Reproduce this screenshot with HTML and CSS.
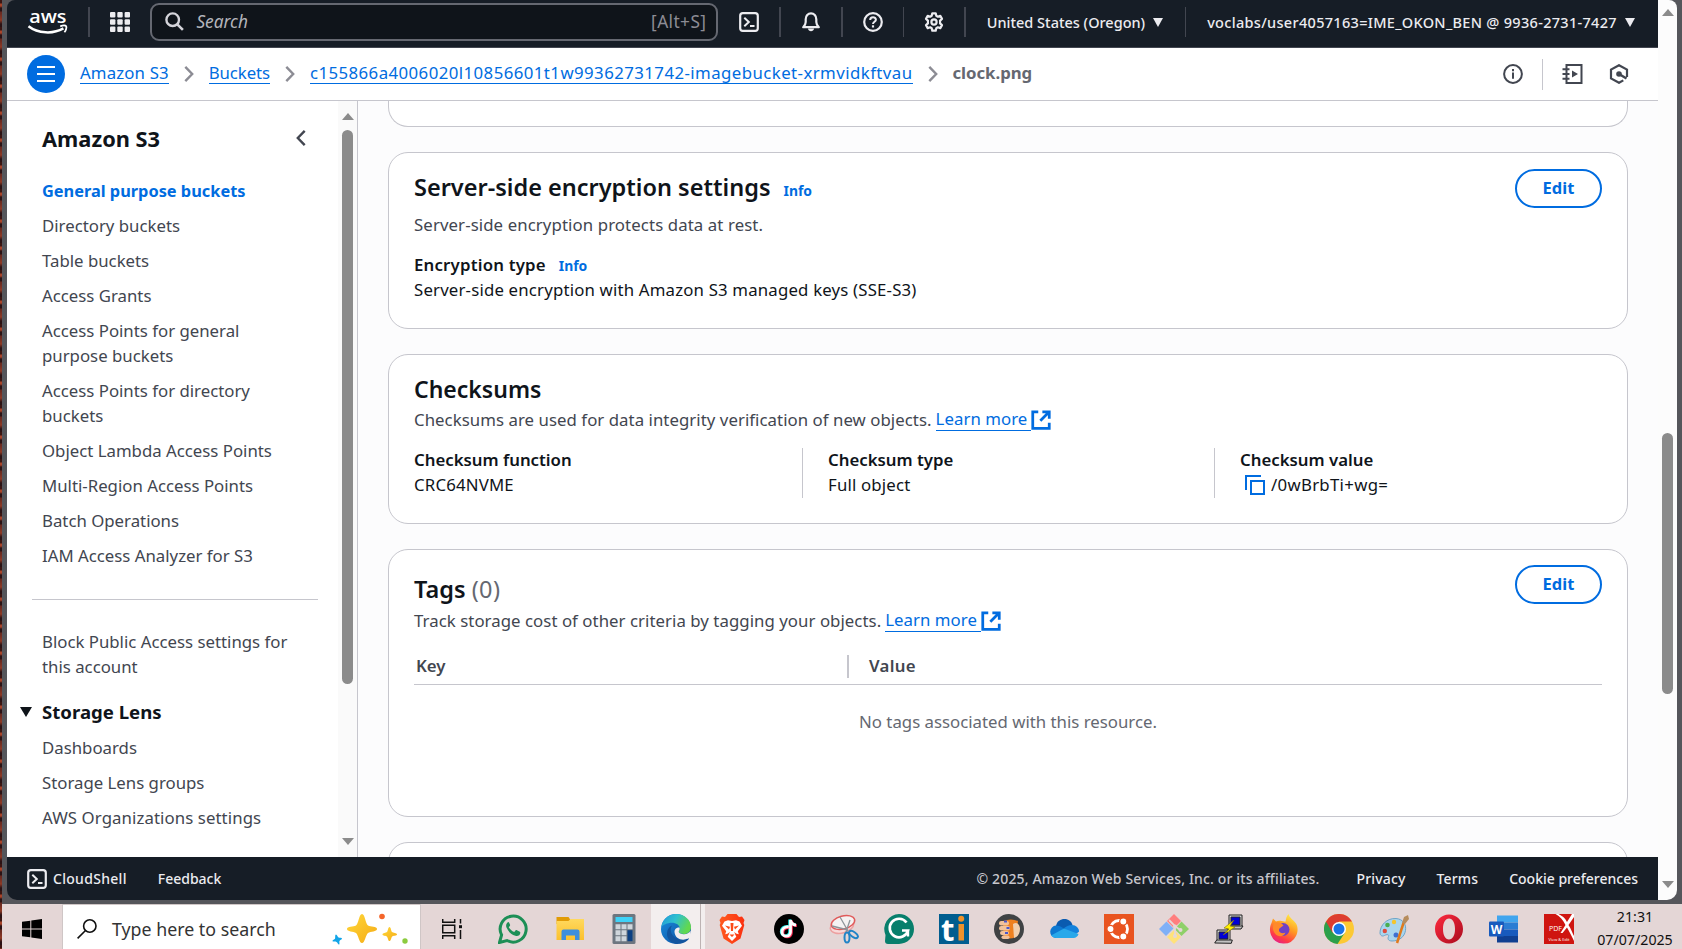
FILE: index.html
```html
<!DOCTYPE html>
<html lang="en">
<head>
<meta charset="utf-8">
<title>clock.png - Amazon S3</title>
<link rel="stylesheet" href="styles.css">
</head>
<body>
<svg class="defs" width="0" height="0">
  <defs>
    <symbol id="ext" viewBox="0 0 16 16"><path d="M6 2H2v12h12v-4M9 2h5v5M14 2 7.500 8.500" fill="none" stroke="currentColor" stroke-width="2"/></symbol>
    <symbol id="shell" viewBox="0 0 20 20"><rect x="1.200" y="1.200" width="17.600" height="17.600" rx="2.600" fill="none" stroke="currentColor" stroke-width="2.200"/><path d="M5.300 5.800 9.800 10l-4.500 4.200M11 14h4.500" fill="none" stroke="currentColor" stroke-width="2"/></symbol>
    <symbol id="chev" viewBox="0 0 10 18"><path d="M1.300 1.800 8.200 9l-6.900 7.200" fill="none" stroke="currentColor" stroke-width="2.400"/></symbol>
    <linearGradient id="edgeA" x1="0" y1="0" x2="1" y2="1"><stop offset="0" stop-color="#1a8fe0"/><stop offset="1" stop-color="#0c4a9b"/></linearGradient>
    <linearGradient id="edgeB" x1="0" y1="0" x2="1" y2=".4"><stop offset="0" stop-color="#2196d8"/><stop offset=".5" stop-color="#2fc1cf"/><stop offset="1" stop-color="#62d84e"/></linearGradient>
    <linearGradient id="fox" x1=".8" y1="0" x2=".3" y2="1"><stop offset="0" stop-color="#fff24a"/><stop offset=".45" stop-color="#ff9a23"/><stop offset=".8" stop-color="#ff3b46"/><stop offset="1" stop-color="#e4208a"/></linearGradient>
    <linearGradient id="gold" x1="0" y1="0" x2="1" y2="1"><stop offset="0" stop-color="#ffd83a"/><stop offset="1" stop-color="#f5ab16"/></linearGradient>
    <linearGradient id="folder" x1="0" y1="0" x2="0" y2="1"><stop offset="0" stop-color="#ffd95e"/><stop offset="1" stop-color="#fbc02d"/></linearGradient>
    <linearGradient id="op" x1="0" y1="0" x2="1" y2="1"><stop offset="0" stop-color="#ff2a3f"/><stop offset="1" stop-color="#a80c1e"/></linearGradient>
    <linearGradient id="brave" x1="0" y1="0" x2="1" y2="0"><stop offset="0" stop-color="#ff5a1f"/><stop offset="1" stop-color="#fb3010"/></linearGradient>
  </defs>
</svg>
<div class="screen">
  <div class="wallpaper"></div>
  <div class="desktop">
    <div class="window">
      <div class="app">
        <header class="topbar">
          <svg class="aws" width="40" height="26" viewBox="0 0 40 26"><text class="aws-word" x="1.200" y="13.500" textLength="37.300" lengthAdjust="spacingAndGlyphs">aws</text><path d="M.5 17.200C10 24.600 25 25.400 35.400 19.400" fill="none" stroke="#fff" stroke-width="2.500"/><path d="M32.200 17.300c3-1 5.400-.8 6 0 .6 1-.2 4-1.800 6" fill="none" stroke="#fff" stroke-width="1.800"/></svg>
          <i class="bar bar-a"></i>
          <svg class="grid" width="20" height="20" viewBox="0 0 20 20" fill="#ececf0"><rect width="5.400" height="5.400" rx="1"/><rect x="7.300" width="5.400" height="5.400" rx="1"/><rect x="14.600" width="5.400" height="5.400" rx="1"/><rect y="7.300" width="5.400" height="5.400" rx="1"/><rect x="7.300" y="7.300" width="5.400" height="5.400" rx="1"/><rect x="14.600" y="7.300" width="5.400" height="5.400" rx="1"/><rect y="14.600" width="5.400" height="5.400" rx="1"/><rect x="7.300" y="14.600" width="5.400" height="5.400" rx="1"/><rect x="14.600" y="14.600" width="5.400" height="5.400" rx="1"/></svg>
          <div class="search">
            <svg width="19" height="19" viewBox="0 0 19 19" fill="none" stroke="#d4d4da"><circle cx="7.700" cy="7.700" r="6.300" stroke-width="2.400"/><path d="m12.300 12.300 5.600 5.600" stroke-width="2.600"/></svg>
            <span class="ph">Search</span>
            <span class="kbd">[Alt+S]</span>
          </div>
          <div class="icons">
            <svg width="20" height="20"><use href="#shell"/></svg>
            <i class="bar"></i>
            <svg width="20" height="20" viewBox="0 0 20 20" fill="none" stroke="currentColor" stroke-width="2.200"><path d="M2.200 15.200h15.600c-1.600-1.600-2.500-3-2.500-5.200V7.200C15.300 4 13 1.400 10 1.400S4.700 4 4.700 7.200V10c0 2.200-.9 3.600-2.500 5.200z" stroke-linejoin="round"/><path d="M7 16.500c.3 3.600 5.700 3.600 6 0z" fill="currentColor" stroke="none"/></svg>
            <i class="bar"></i>
            <svg width="20" height="20" viewBox="0 0 20 20" fill="none" stroke="currentColor" stroke-width="2.200"><circle cx="10" cy="10" r="8.800"/><path d="M7.200 8c0-3.600 5.700-3.600 5.700-.2 0 2-2.900 2-2.900 4.200" stroke-width="2"/><path d="M10 13.300v2.200" stroke-width="2.200"/></svg>
            <i class="bar"></i>
            <svg width="20" height="20" viewBox="0 0 20 20" fill="none" stroke="currentColor" stroke-width="2.200" stroke-linejoin="round"><circle cx="10" cy="10" r="2.600"/><path d="M8.300 1.300h3.400l.6 2.500 1.500.9 2.500-.8 1.700 3-1.900 1.700v2.800l1.900 1.700-1.700 3-2.500-.8-1.500.9-.6 2.500H8.300l-.6-2.500-1.500-.9-2.500.8-1.700-3 1.900-1.700V8.600L2 6.900l1.700-3 2.500.8 1.500-.9z"/></svg>
            <i class="bar"></i>
          </div>
          <span class="tl region">United States (Oregon)</span><i class="caret"></i>
          <i class="bar bar-b"></i>
          <span class="tl account">voclabs/user4057163=IME_OKON_BEN @ 9936-2731-7427</span><i class="caret"></i>
        </header>
        <nav class="crumbs">
          <span class="burger"><i></i><i></i><i></i></span>
          <a class="root">Amazon S3</a><svg class="sep" width="10" height="18"><use href="#chev"/></svg>
          <a class="mid">Buckets</a><svg class="sep" width="10" height="18"><use href="#chev"/></svg>
          <a class="bucket">c155866a4006020l10856601t1w99362731742-imagebucket-xrmvidkftvau</a><svg class="sep" width="10" height="18"><use href="#chev"/></svg>
          <b>clock.png</b>
          <div class="tools">
            <svg width="20" height="20" viewBox="0 0 20 20" fill="none" stroke="currentColor" stroke-width="2"><circle cx="10" cy="10" r="8.900"/><path d="M10 8.500v6.300M10 5v2.200"/></svg>
            <i class="rule"></i>
            <svg width="21" height="20" viewBox="0 0 21 20" fill="none" stroke="currentColor" stroke-width="2"><path d="M4.500 1h15v18h-15z"/><path d="M.5 5.200h7M.5 10h7M.5 14.800h7" stroke-width="1.900"/><path d="m10 6.500 6 3.500-6 3.500z" fill="currentColor" stroke="none"/></svg>
            <svg class="hex" width="20" height="20" viewBox="0 0 20 20" fill="none" stroke="currentColor" stroke-width="2.200"><path d="M18 13V5.600L10 1.200 2 5.600v8.800l8 4.400 4.300-2.400"/><circle cx="10" cy="10" r="2.800" fill="currentColor" stroke="none"/><path d="m10 10 7.500 4.500" stroke-width="2.600"/></svg>
          </div>
        </nav>
        <div class="body">
          <aside class="side">
            <div class="nav">
              <div class="nav-head"><span>Amazon S3</span><svg width="10" height="18"><use href="#chev"/></svg></div>
              <ul>
                <li class="on">General purpose buckets</li>
                <li>Directory buckets</li>
                <li>Table buckets</li>
                <li>Access Grants</li>
                <li>Access Points for general<br>purpose buckets</li>
                <li>Access Points for directory<br>buckets</li>
                <li>Object Lambda Access Points</li>
                <li>Multi-Region Access Points</li>
                <li>Batch Operations</li>
                <li>IAM Access Analyzer for S3</li>
              </ul>
              <hr>
              <ul>
                <li>Block Public Access settings for<br>this account</li>
                <li class="group"><i></i>Storage Lens</li>
                <li>Dashboards</li>
                <li>Storage Lens groups</li>
                <li class="wide">AWS Organizations settings</li>
              </ul>
            </div>
            <div class="sbar"><i class="up"></i><i class="thumb"></i><i class="down"></i></div>
          </aside>
          <main class="main">
            <section class="card card-prev"></section>
            <section class="card sse">
              <div class="text">
                <h2>Server-side encryption settings<small>Info</small></h2>
                <p class="sub">Server-side encryption protects data at rest.</p>
                <p class="label">Encryption type<small>Info</small></p>
                <p class="val">Server-side encryption with Amazon S3 managed keys (SSE-S3)</p>
              </div>
              <button class="edit">Edit</button>
            </section>
            <section class="card sums">
              <h2>Checksums</h2>
              <p class="sub">Checksums are used for data integrity verification of new objects.<a>Learn more</a><svg width="22" height="22"><use href="#ext"/></svg></p>
              <div class="cols">
                <div><p class="label">Checksum function</p><p class="val">CRC64NVME</p></div>
                <div><p class="label">Checksum type</p><p class="val">Full object</p></div>
                <div><p class="label">Checksum value</p><p class="val copy"><svg width="20" height="20" viewBox="0 0 20 20" fill="none" stroke="currentColor" stroke-width="2"><path d="M6 6h13v13H6z"/><path d="M1 15V1h15"/></svg>/0wBrbTi+wg=</p></div>
              </div>
            </section>
            <section class="card tags">
              <div class="tags-top"><h2>Tags <em>(0)</em></h2><button class="edit">Edit</button></div>
              <p class="sub">Track storage cost of other criteria by tagging your objects.<a>Learn more</a><svg width="22" height="22"><use href="#ext"/></svg></p>
              <div class="thead"><span class="k">Key</span><span class="v">Value</span></div>
              <p class="none">No tags associated with this resource.</p>
            </section>
            <section class="card card-next"></section>
          </main>
        </div>
        <footer class="foot">
          <svg width="20" height="20"><use href="#shell"/></svg><span class="f1">CloudShell</span><span>Feedback</span>
          <span class="copyr">© 2025, Amazon Web Services, Inc. or its affiliates.</span><span class="f3">Privacy</span><span class="f4">Terms</span><span class="f5">Cookie preferences</span>
        </footer>
      </div>
      <div class="vbar"><i class="up"></i><i class="thumb"></i><i class="down"></i></div>
    </div>
    <div class="taskbar">
      <svg class="start" width="20" height="20" viewBox="0 0 20 20"><path d="M0 2.800 8.300 1.700v7.900H0zM9.300 1.500 20 0v9.600H9.300zM0 10.500h8.300v7.800L0 17.200zM9.300 10.500H20V20L9.300 18.500z"/></svg>
      <div class="tsearch">
        <svg width="20" height="20" viewBox="0 0 20 20" fill="none" stroke="#111" stroke-width="1.600"><circle cx="12.800" cy="7" r="6.200"/><path d="M8.500 11.500.6 19.400"/></svg>
        <span>Type here to search</span>
        <svg class="stars" width="78" height="34" viewBox="0 0 78 34"><path d="M31 2c3 0 3.500 10 6 11.500S46 14 46 17s-6.500 2-9 4-3 10-6 10-3.500-8-6-10-9-1-9-4 6.500-2 9-3.500S28 2 31 2z" fill="url(#gold)"/><path d="M58.500 15c1.500 0 1.500 4 2.500 5s5 1 5 2.500-4 1-5 2.200-1 4.300-2.500 4.300-1.500-3.200-2.500-4.300-4.500-.7-4.500-2.200 3.500-1.500 4.500-2.500 1-5 2.500-5z" fill="url(#gold)"/><path d="M5 22.500c1 0 1.500 2.500 2.500 3s3.500 0 3.500 1-2 1.500-2.500 2.500.5 3.500-.5 3.500-1.500-2-2.500-2.500S1.500 30 1.500 29s2-1.300 2.500-2.200-.2-4.300 1-4.300z" fill="#12a5e8"/><circle cx="51" cy="4.500" r="2.800" fill="#f4652a"/><circle cx="74" cy="29" r="2.700" fill="#8ccb3f"/></svg>
      </div>
      <div class="apps">
        <div class="ap tv"><svg width="20" height="20" viewBox="0 0 20 20" fill="none" stroke="#111" stroke-width="1.500"><path d="M.7 0v3.200h12V0M.7 20v-3.300h12V20M.7 6.200h12v7.500H.7zM18.500 0v4.500M18.500 11v9"/><path d="M17 6.200h3v3h-3z" fill="#111" stroke="none"/></svg></div>
        <div class="ap a2"><svg width="30" height="30" viewBox="0 0 30 30"><path d="M1.500 28.500 3.600 21A13 13 0 1 1 9 26.500z" fill="none" stroke="#1d8f56" stroke-width="3"/><path d="M10.500 8c-2.200.8-2.900 3.300-2 5.600 1.800 4.200 4.700 6.900 8.900 8.200 2.500.7 4.700-.6 4.900-2.900.1-.9-.2-1.200-.9-1.500l-2.500-1.200c-.8-.4-1.200-.2-1.700.5l-.9 1.200c-2.500-.9-4.200-2.500-5.500-4.700l1-1.300c.4-.5.4-1 .2-1.500L11 8.500c-.2-.4-.3-.6-.5-.5z" fill="#1d8f56"/></svg></div>
        <div class="ap a3"><svg width="30" height="30" viewBox="0 0 30 30"><path d="M1.500 3h12l2 3v4h-14z" fill="#e19b06"/><path d="M1.500 7h12l2-2H29v21H1.500z" fill="url(#folder)"/><path d="M6.500 26V17.500q0-2 2-2h14q2 0 2 2V26h-4.500v-4.500h-9V26z" fill="#3d8fdc"/></svg></div>
        <div class="ap a4"><svg width="30" height="30" viewBox="0 0 30 30"><rect x="3.500" width="23" height="30" rx="1.500" fill="#6d7680"/><path d="M6.500 3h17v5h-17z" fill="#3fd2f8"/><g fill="#cfd6dc"><path d="M6.500 10.200h5v5h-5zM12.500 10.200h5v5h-5zM18.500 10.200h5v5h-5zM6.500 16.200h5v5h-5zM12.500 16.200h5v5h-5zM6.500 22.200h5v5h-5zM12.500 22.200h5v5h-5z"/></g><path d="M18.500 16.200h5v11h-5z" fill="#0b4083"/></svg></div>
        <div class="ap edge"><svg width="30" height="30" viewBox="0 0 30 30"><circle cx="15" cy="15" r="15" fill="url(#edgeA)"/><path d="M.4 13C1.500 5 8 0 15 0c8.500 0 15 6 15 13.200 0 4-3.200 6.800-7 6.800-2.800 0-5.200-.8-5.200-2.200 0-.9 1-1.500 1-3.300C18.800 11 15 8.700 11 8.700 6 8.700 1.800 11 .4 13z" fill="url(#edgeB)"/><path d="M11 11.500c-2.800 3.500-1.500 12.500 8.500 14 4 .5 7-.8 8.200-1.300.4 0 .5.300.3.600C25.500 28.300 20.500 30 16 30 10 29.500 5.500 24.500 6 19c.3-4 2.500-6.500 5-7.500z" fill="#12559f"/><path d="M18.700 14.500c0 2-1 2.400-1 3.300 0 1.500 2.500 2.400 5.300 2.400 3 0 5.200-1.300 6.500-3.500L30 22l-3 2.500c-5.500 2.800-13 .5-13.500-6.500 0-2.500 1.500-4.500 5-4.500z" fill="#f3eeee"/></svg></div>
        <div class="ap a6"><svg width="30" height="30" viewBox="0 0 30 30"><path d="m8 3 2.500-3h9L22 3l3-.5L27.500 6l-1 3 .8 2-3.800 13.500L15 30l-8.500-5.500L2.700 11l.8-2-1-3L5 2.500z" fill="url(#brave)"/><path d="M7.500 7.500 11 6.300l4 .8 4-.8 3.500 1.200 2.500 4.300-4.200 5.400 1 3-2.800-.7-1.800-1.800.9 2.600 1.200 2.500L15 27l-4.300-4.200 1.200-2.500.9-2.600-1.800 1.800-2.800.7 1-3L5 11.800z" fill="#fff"/><path d="m8 11.500 5 1.200-1 2.800zM22 11.500l-5 1.200 1 2.800zM13.500 9h3l-.5 8h-2zM12.500 20.500h5L15 23z" fill="#fb4a18"/></svg></div>
        <div class="ap"><svg width="30" height="30" viewBox="0 0 30 30"><circle cx="15" cy="15" r="15" fill="#000"/><g fill="none" stroke-width="2.800"><path d="M14.800 13c-4.500-.5-7 2.200-6.800 5.300.3 5.200 8.400 5.300 8.500-.3V6c.5 3 2.500 4.800 5.500 5" stroke="#25f4ee" transform="translate(-.8 -.6)"/><path d="M14.800 13c-4.500-.5-7 2.200-6.800 5.300.3 5.200 8.400 5.300 8.500-.3V6c.5 3 2.500 4.800 5.500 5" stroke="#fe2c55" transform="translate(.9 .7)"/><path d="M14.800 13c-4.500-.5-7 2.200-6.800 5.300.3 5.200 8.400 5.300 8.500-.3V6c.5 3 2.500 4.800 5.500 5" stroke="#fff"/></g></svg></div>
        <div class="ap"><svg width="30" height="30" viewBox="0 0 30 30" fill="none"><ellipse cx="13" cy="12" rx="12" ry="7" transform="rotate(-15 13 12)" fill="#f7dada" stroke="#eda0a0" stroke-width="1.400"/><ellipse cx="14" cy="8.500" rx="12" ry="6.500" transform="rotate(-15 14 8.500)" fill="#f5f2f2" stroke="#e05a5a" stroke-width="1.500"/><path d="m11 3 8 14M3 12l16 4M21 6l-4 12" stroke="#8d9499" stroke-width="1.300"/><ellipse cx="18" cy="23.500" rx="2.500" ry="5" stroke="#2184c7" stroke-width="2"/><ellipse cx="24.500" cy="20.500" rx="2.500" ry="5" transform="rotate(-55 24.500 20.500)" stroke="#2184c7" stroke-width="2"/></svg></div>
        <div class="ap"><svg width="30" height="30" viewBox="0 0 30 30"><path d="M15 0a15 15 0 1 1 0 30H4q-3 0-3-3l.5-6A15 15 0 0 1 15 0z" fill="#077f6c"/><path d="M22.500 8.500A9.300 9.300 0 1 0 24 16.500h-6" fill="none" stroke="#fff" stroke-width="2.700"/><path d="M24 16.500v6" stroke="#fff" stroke-width="2.400"/></svg></div>
        <div class="ap"><svg class="vis" width="30" height="30" viewBox="0 0 30 30"><path d="M0 0h30v30H0z" fill="#005d8f"/><text class="ti" x="2" y="26.500">t</text><path d="M19.500 10h5.500v16.500h-5.500z" fill="#f0922b"/><circle cx="22.200" cy="4.800" r="3" fill="#f0922b"/></svg></div>
        <div class="ap"><svg width="30" height="30" viewBox="0 0 30 30"><circle cx="15" cy="15" r="15" fill="#3f4244"/><path d="M9 7q8-3 15 0l-2.500 16q-6 3-12 0z" fill="#ee8120"/><path d="M19 10c4-3 7 1 7 5s-2 8-6 9z" fill="#f1cfae"/><g fill="#f1c19a"><rect x="5" y="7" width="10" height="4.500" rx="2.200"/><rect x="5" y="12" width="11" height="4.500" rx="2.200"/><rect x="6" y="17" width="9" height="4" rx="2"/><rect x="7.500" y="21.500" width="8" height="3.500" rx="1.700"/></g><path d="M10 6.500h3v2h-3zM12.500 13h3v2h-3zM11 18h3v2h-3z" fill="#4a57c9"/></svg></div>
        <div class="ap"><svg width="30" height="30" viewBox="0 0 30 30"><path d="M7 12C8 7 11.500 5 15.500 5c4 0 7 2.500 8 6l-9 8z" fill="#0a5bb0"/><path d="M7 11.500c3 0 5 1 7 2.500l9 6-15 4H6.500a6.300 6.300 0 0 1 .5-12.500z" fill="#0d78d1"/><path d="M23 11c4 0 7 3 7 6.700l-6 4.300-9-7.700c2-2 4.500-3.300 8-3.300z" fill="#1382dc"/><path d="m15 14.500 14.500 5.500a5.700 5.700 0 0 1-5 4H7A6.400 6.400 0 0 1 2 21.500z" fill="#28a8ea"/></svg></div>
        <div class="ap"><svg width="30" height="30" viewBox="0 0 30 30"><path d="M0 0h30v30H0z" fill="#e95420"/><circle cx="15" cy="15" r="8.500" fill="none" stroke="#fff" stroke-width="2.800"/><g fill="#fff" stroke="#e95420" stroke-width="1.300"><circle cx="6.500" cy="15" r="3.600"/><circle cx="19.300" cy="7.500" r="3.600"/><circle cx="19.300" cy="22.500" r="3.600"/></g></svg></div>
        <div class="ap"><svg width="30" height="30" viewBox="0 0 30 30"><path d="m15 0 7 7-7 7-7-7z" fill="#ff7e7e"/><path d="m7.500 7.500 7 7-7.500 7.500L0 15z" fill="#7fb0f7"/><path d="m22.500 7.500 7.500 7.500-7.500 7-7-7z" fill="#8fd069"/><path d="m15 16 7 7-7 7-7-7z" fill="#ffe27a"/><path d="m10 6 6 6v10M16 12l5 4" fill="none" stroke="#e5d7d7" stroke-width="1.800"/><circle cx="16" cy="12.500" r="2" fill="#e5d7d7"/><circle cx="21.500" cy="16" r="2" fill="#e5d7d7"/><circle cx="16" cy="22" r="2" fill="#e5d7d7"/></svg></div>
        <div class="ap"><svg width="30" height="30" viewBox="0 0 30 30" stroke="#222" stroke-width="1"><path d="M15 1h13v12H15z" fill="#d6d6d6"/><path d="M17 3h9v8h-9z" fill="#0000d8"/><path d="m13 14 2-2h14l-2 3H13z" fill="#c2c2c2"/><path d="M3 16h13v11H3z" fill="#d6d6d6"/><path d="M5 18h9v7H5z" fill="#0000d8"/><path d="m.7 29 2-3h15.600l-1 3.300z" fill="#c2c2c2"/><path d="m20 6-10 8 5 1-6 6 12-8-5-1z" fill="#ffee00" stroke="#7a7200" stroke-width=".6"/></svg></div>
        <div class="ap"><svg width="30" height="30" viewBox="0 0 30 30"><path d="M19.500 0c1 4 5 6 7.500 9.500 2 3 2.200 8.500 0 12.500a13.700 13.700 0 0 1-25-1C.3 17 .8 12 2.500 9L4 4.500l3 3c2-1 4-.8 5.500-.5l4 .8C17 5 17.500 2 19.500 0z" fill="url(#fox)"/><circle cx="14" cy="15.500" r="6.500" fill="#7040c4"/><path d="M5 9c3-1.500 7-1 9.500 2.500L11 14c-1.200 1-1.500 2.500-.3 4 1.500 1.500 4 1.500 5.800.5-1.500 4.500-7.500 5-10.500 1S4 12 5 9z" fill="#ff8a2a"/></svg></div>
        <div class="ap"><svg width="30" height="30" viewBox="0 0 30 30"><circle cx="15" cy="15" r="15" fill="#fcc934"/><path d="M15 15 2 7.500A15 15 0 0 0 13.500 30L21 18.500z" fill="#2b9f4b"/><path d="M2 7.500A15 15 0 0 1 28 7.500H15L8.500 18.700z" fill="#dd3c30"/><circle cx="15" cy="15" r="7" fill="#fff"/><circle cx="15" cy="15" r="5.500" fill="#1a73e8"/></svg></div>
        <div class="ap"><svg width="30" height="30" viewBox="0 0 30 30"><path d="M1 19C1 11 8 4 17 4.500c7 .5 10.500 6 9.500 12C25.500 23 20 27 13 27c-4 0-4.500-2.500-3.500-4.500S8 20 5.500 21.500 1 21 1 19z" fill="#a9d5ee" stroke="#6fa5c8"/><circle cx="5.800" cy="17" r="2.200" fill="#e04b3a"/><circle cx="8.500" cy="11" r="2.300" fill="#4aae4f"/><circle cx="15" cy="8" r="2.200" fill="#f5c52c"/><circle cx="17" cy="21" r="2.500" fill="#3f6fd0"/><path d="M18 29 24.500 9" stroke="#e07a1c" stroke-width="2.500"/><path d="m23 9 2-6 4-2 1 4-4 5z" fill="#b78c5c"/></svg></div>
        <div class="ap"><svg width="30" height="30" viewBox="0 0 30 30"><path fill-rule="evenodd" d="M15 .5C23 .5 29 7 29 15s-6 14.500-14 14.500S1 23 1 15 7 .5 15 .5zm0 4c-3.700 0-6 4.500-6 10.500s2.300 10.500 6 10.500S21 21 21 15 18.700 4.500 15 4.500z" fill="url(#op)"/></svg></div>
        <div class="ap"><svg width="30" height="30" viewBox="0 0 30 30"><path d="M8 1.500h21v7H8z" fill="#41a5ee"/><path d="M8 8.500h21v7H8z" fill="#2b7cd3"/><path d="M8 15.500h21v6.500H8z" fill="#185abd"/><path d="M8 22h21v6.500H8z" fill="#103f91"/><rect y="7.500" width="15" height="15" rx="1" fill="#185abd"/><text class="wd" x="1.800" y="19.500">W</text></svg></div>
        <div class="ap"><svg width="30" height="30" viewBox="0 0 30 30"><path d="M0 0h30v30H0z" fill="#cf1510"/><path d="M11.500 0h3c5 2.500 7 5 8.500 8L28 0h2v3l-5.500 8c2.500 4 3.500 7 5.500 11v5c-3-6-5-10-7-13.500L18.500 19h-2l5-8C19 6 16 2.500 11.500 0z" fill="#fff"/><text class="pdf" x="5" y="16.500">PDF</text><text class="pdf s" x="4.500" y="26.500">View &amp; Edit</text></svg></div>
        <div class="clock"><span>21:31</span><span>07/07/2025</span></div>
      </div>
    </div>
  </div>
</div>
</body>
</html>
```
FILE: styles.css
```css
* { box-sizing: border-box; }
body { margin: 0; font-family: "Noto Sans", sans-serif; font-size: 16.800px; color: #0f141a; overflow: hidden; }
p, h2, ul { margin: 0; padding: 0; }
svg { display: block; flex: none; }
.vis { overflow: visible; }
.defs { position: absolute; }
.screen { display: flex; width: 1682px; height: 949px; }
.wallpaper { width: 2px; background: repeating-linear-gradient(#3a1512 0 3px, #a8442a 4px 6px, #2a1214 8px 11px, #6a2a20 12px 13px, #8e3a26 20px, #2a1214 24px 27px); }
.desktop { flex: 1; display: flex; flex-direction: column; }
.window { height: 904px; padding: 0 5px 4px; display: flex; background: #55565b; }
.app { width: 1651px; display: flex; flex-direction: column; background: #161d26; border-radius: 8px 0 0 10px; overflow: hidden; }

.topbar { height: 48px; flex: none; display: flex; align-items: center; padding: 0 0 4px 21px; color: #ececf0; border-bottom: 1px solid #424650; font-size: 14.500px; }
.aws { overflow: visible; }
.aws-word { font: 600 18px "Open Sans", sans-serif; fill: #fff; }
.bar { width: 1.600px; height: 30px; background: #424650; }
.bar-a { margin: 0 20px; }
.search { width: 568px; height: 38px; margin-left: 20.800px; padding: 0 10px 0 13px; display: flex; align-items: center; border: 2px solid #656871; border-radius: 9px; background: #0f141a; }
.ph { flex: 1; margin-left: 12px; font-style: italic; font-size: 17.300px; color: #b4b4bb; }
.kbd { font-size: 17.300px; letter-spacing: .4px; color: #8c8c94; }
.icons { display: flex; align-items: center; gap: 20px; margin-left: 21px; }
.tl { white-space: nowrap; font-weight: 500; padding-top: 1px; }
.account { letter-spacing: .31px; }
.region { margin-left: 21px; }
.caret { border: 5px solid transparent; border-top: 9px solid #ececf0; border-bottom: 0; margin: 1px 0 0 8px; }
.bar-b { margin: 0 21px 0 22px; width: 1px; }

.crumbs { height: 53px; flex: none; display: flex; align-items: center; padding-left: 20px; background: #fff; border-bottom: 1px solid #c6c6cd; }
.burger { width: 38px; height: 38px; margin-right: 15px; border-radius: 50%; background: #006ce0; display: flex; flex-direction: column; align-items: center; justify-content: center; gap: 5px; }
.burger i { width: 18px; height: 2px; background: #fff; }
.crumbs a { color: #006ce0; line-height: 20px; margin-bottom: 1px; border-bottom: 1px solid #006ce0; white-space: nowrap; }
.crumbs .root { letter-spacing: .15px; }
.crumbs .mid { letter-spacing: -.1px; }
.crumbs .bucket { letter-spacing: .44px; }
.sep { margin: 0 15px; color: #8c8c94; }
.crumbs b { color: #656871; font-weight: 700; letter-spacing: -.05px; margin-bottom: 3px; }
.tools { margin-left: auto; margin-right: 29px; display: flex; align-items: center; color: #424650; }
.rule { width: 1px; height: 31px; margin: 0 19px; background: #c6c6cd; }
.hex { margin-left: 26px; }

.body { flex: 1; display: flex; background: #fcfcfd; min-height: 0; }
.side { width: 351px; flex: none; display: flex; background: #fff; border-right: 1px solid #c6c6cd; }
.nav { width: 331px; padding: 22px 0 0 35px; color: #424650; }
.nav-head { display: flex; align-items: center; justify-content: space-between; height: 30px; padding-right: 32px; margin-bottom: 26px; font-size: 21.800px; font-weight: 700; color: #0f141a; }
.nav-head svg { transform: scaleX(-1); color: #424650; }
.nav ul { list-style: none; }
.nav li { line-height: 25px; margin-bottom: 10px; white-space: nowrap; }
.nav .on { color: #006ce0; font-weight: 700; font-size: 16.350px; margin-bottom: 9px; }
.nav .wide { letter-spacing: .09px; }
.nav hr { width: 286px; height: 1px; border: 0; margin: 31px 0 29px -10px; background: #c6c6cd; }
.nav .group { display: flex; align-items: center; margin: 20px 0 11px -22px; font-size: 18.600px; font-weight: 700; color: #0f141a; }
.group i { border: 6px solid transparent; border-top: 10px solid #0f141a; border-bottom: 0; margin-right: 10px; }
.sbar { width: 19px; background: #fafafa; display: flex; flex-direction: column; align-items: center; padding: 12px 0; }
.up { border: 6.500px solid transparent; border-top: 0; border-bottom: 7px solid #8b8b8b; }
.down { border: 6.500px solid transparent; border-bottom: 0; border-top: 7px solid #8b8b8b; margin-top: auto; }
.thumb { width: 11px; border-radius: 6px; background: #8b8b8b; }
.sbar .thumb { height: 554px; margin-top: 10px; }
.vbar { width: 19px; flex: none; display: flex; flex-direction: column; align-items: center; padding: 9px 0 12px; background: #fcfcfc; border-radius: 0 8px 10px 0; }
.vbar .thumb { height: 261px; margin-top: 417px; }

.main { flex: 1; padding: 0 30px; display: flex; flex-direction: column; gap: 25px; overflow: hidden; }
.card { flex: none; border: 1px solid #c6c6cd; border-radius: 20px; background: #fff; padding: 0 25px; line-height: 25px; }
.card-prev { height: 26px; border-top: 0; border-radius: 0 0 20px 20px; }
.sse { height: 177px; display: flex; justify-content: space-between; padding-top: 16px; }
.card h2 { font-size: 23.500px; line-height: 38px; font-weight: 600; white-space: nowrap; }
.sse h2 { margin: -1px 0 2px; }
.card small { font-size: 13.900px; font-weight: 700; color: #006ce0; margin-left: 13px; letter-spacing: 0; }
.sub { color: #424650; white-space: nowrap; display: flex; align-items: center; letter-spacing: .05px; }
.sse .sub { letter-spacing: .1px; }
.sub a { color: #006ce0; border-bottom: 1px solid #006ce0; line-height: 22px; margin-left: 4px; padding-right: 4px; }
.sub svg { color: #006ce0; margin-left: -1px; }
.label { font-weight: 600; }
.sse .label { margin: 15px 0 -1px; letter-spacing: .2px; }
.val { letter-spacing: .18px; }
.edit { width: 87px; height: 39px; padding: 0 0 2px; border: 2px solid #006ce0; border-radius: 20px; background: #fff; color: #006ce0; font: 700 16.500px "Noto Sans", sans-serif; }
.sums { height: 170px; padding-top: 15px; }
.sums h2 { font-size: 23px; }
.sums .sub { margin-top: -1px; }
.sums .cols { display: grid; grid-template-columns: 388px 412px 1fr; margin-top: 16px; }
.cols > div { height: 50px; }
.cols .label { margin-top: -1px; }
.cols > div + div { border-left: 1px solid #c6c6cd; padding-left: 25px; }
.copy { display: flex; align-items: center; letter-spacing: .3px; }
.copy svg { color: #006ce0; margin: 0 6px 0 5px; }
.tags { height: 268px; padding-top: 15px; }
.tags-top { display: flex; justify-content: space-between; }
.tags h2 { padding-top: 5px; }
.tags h2 em { font-style: normal; font-weight: 400; color: #656871; letter-spacing: .4px; }
.thead { display: flex; height: 52px; padding-top: 20px; border-bottom: 1px solid #c6c6cd; font-weight: 600; color: #424650; }
.thead .k { padding-left: 2px; width: 433px; }
.thead .v { height: 23px; margin-top: 2px; line-height: 21px; border-left: 2px solid #c6c6cd; padding-left: 20px; letter-spacing: .3px; }
.none { text-align: center; color: #656871; margin-top: 24px; }
.card-next { height: 60px; }

.foot { height: 43px; flex: none; display: flex; align-items: center; padding: 0 20px 0 20px; color: #ececf0; font-size: 14px; font-weight: 500; white-space: nowrap; }
.f1 { margin: 0 31px 0 6px; letter-spacing: .3px; }
.copyr { margin-left: auto; color: #c6c6cd; letter-spacing: .15px; }
.f3 { margin-left: 37px; letter-spacing: .15px; }
.f4, .f5 { margin-left: 31px; }
.f4 { letter-spacing: .15px; }

.taskbar { height: 45px; display: flex; align-items: center; background: #e4d6d6; }
.start { margin: 5px 20px 0; }
.tsearch { width: 359px; height: 45px; padding: 3px 11px 0 14px; display: flex; align-items: center; background: #fff; border: 1px solid #cfc6c6; border-bottom: 0; font-size: 17.800px; color: #333; }
.tsearch span { margin-left: 15px; }
.stars { margin-left: auto; }
.apps { flex: 1; display: flex; align-items: center; height: 45px; }
.ap { width: 55px; height: 45px; padding-top: 5px; flex: none; display: flex; align-items: center; justify-content: center; }
.tv { width: 62px; }
.a2 { width: 60px; }
.edge { width: 49px; background: #f3eeee; }
.a3 { width: 53px; }
.a6 { border-left: 1px solid #bdb3b3; width: 61px; padding-left: 2px; background: linear-gradient(90deg, #f3eeee 4px, transparent 4px); }
.clock { flex: 1; display: flex; flex-direction: column; align-items: center; font-size: 14.200px; line-height: 23px; color: #111; padding: 2px 0 0 2px; }
.ti { font: 700 31px/30px "Open Sans", sans-serif; fill: #fff; }
.wd { font: 700 12px "Open Sans", sans-serif; fill: #fff; }
.pdf { font: 500 7px "Open Sans", sans-serif; fill: #fff; }
.s { font-size: 4px; }
```
